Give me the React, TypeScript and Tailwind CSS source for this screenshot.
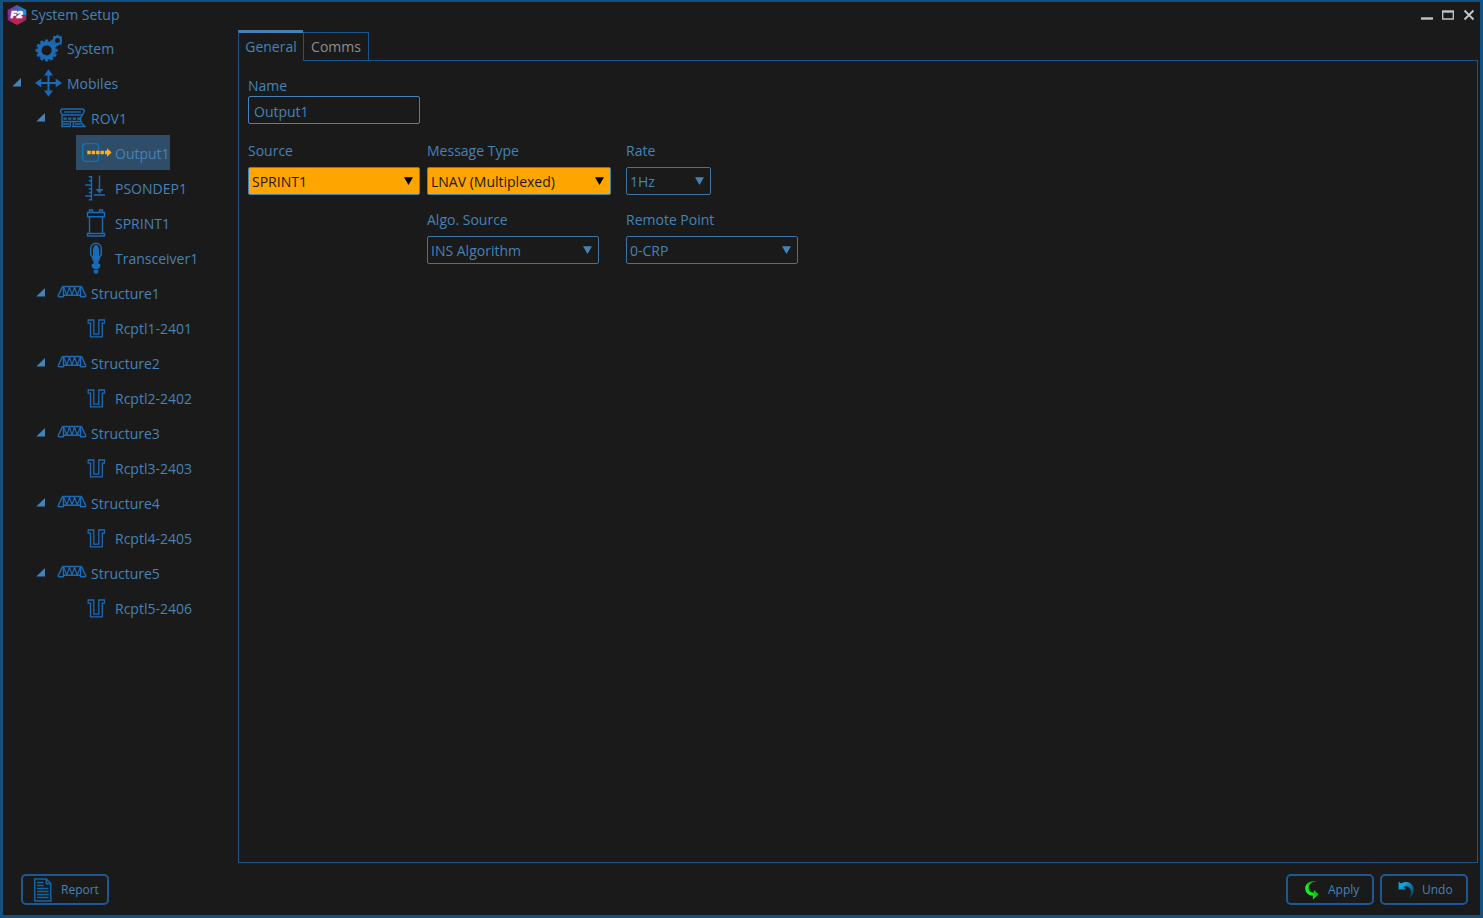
import { useState } from "react";
import type { ReactNode } from "react";

const BLUE = "#1c69b4";

function Logo() {
  return (
    <svg className="h-5 w-5" viewBox="0 0 20 20" aria-hidden="true">
      <defs>
        <linearGradient id="logoTop" x1="0" y1="0.2" x2="1" y2="0.3">
          <stop offset="0" stopColor="#a3248a" />
          <stop offset="0.5" stopColor="#4a58b0" />
          <stop offset="1" stopColor="#0b9be0" />
        </linearGradient>
        <linearGradient id="logoBottom" x1="0" y1="0" x2="1" y2="0.3">
          <stop offset="0" stopColor="#7a2a92" />
          <stop offset="0.6" stopColor="#d01f45" />
          <stop offset="1" stopColor="#8a2c80" />
        </linearGradient>
      </defs>
      <path d="M10 0 19.3 5v5.5H.7V5z" fill="url(#logoTop)" />
      <path d="M.7 10.3h18.6V15L10 20 .7 15z" fill="url(#logoBottom)" />
      <text x="9.7" y="13.2" textAnchor="middle" fontSize="9.5" fontWeight="900" fontStyle="italic" fontFamily="Inter, sans-serif" fill="#fff" stroke="#fff" strokeWidth="0.5">
        F2
      </text>
    </svg>
  );
}

function GearsIcon() {
  return (
    <svg className="h-7 w-7" viewBox="0 0 28 28" fill="none" stroke={BLUE} aria-hidden="true">
      <circle cx="12.6" cy="16.4" r="7.2" strokeWidth="4.4" />
      <circle cx="12.6" cy="16.4" r="9.800" strokeWidth="2.4" pathLength="24" strokeDasharray="1.200 .8" strokeDashoffset="0.6" />
      <circle cx="23.4" cy="6.4" r="3.600" strokeWidth="2.200" />
      <circle cx="23.4" cy="6.4" r="4.9" strokeWidth="1.6" pathLength="16" strokeDasharray="1.100 .9" strokeDashoffset="0.5" />
    </svg>
  );
}

function MoveIcon() {
  return (
    <svg className="h-7 w-7" viewBox="0 0 28 28" fill={BLUE} aria-hidden="true">
      <path d="M14.500 4v20M5 14h19" stroke={BLUE} strokeWidth="2" />
      <path d="M14.5.3 19 6.600h-9zM14.500 27.700 19 21.400h-9zM1 14l6.300-4.500v9zM28 14l-6.300-4.500v9z" />
    </svg>
  );
}

function RovIcon() {
  return (
    <svg className="h-7 w-7" viewBox="0 0 28 28" fill="none" stroke={BLUE} strokeWidth="1.4" aria-hidden="true">
      <path d="M5 5h19c1.500 0 2.300 1 2.300 2.200L24.500 11H4.500L2.700 8.500V7C2.700 5.800 3.500 5 5 5z" />
      <path d="M6 8h17" strokeWidth="1.4" />
      <path d="M4 11v11.500" />
      <path d="M5.500 14.700h17" strokeWidth="2.200" strokeDasharray="3.200 1.400" />
      <path d="M4 17.500h19.500M3.300 22.500h9M14 22.500h13.700M4 20h7M17 20h6M24 11.200c-2.200 3-2 8 2.500 11M12.300 17.500v5M16.200 17.500c-1 1.400-1 3.500-.5 5" />
    </svg>
  );
}

function OutputIcon() {
  return (
    <svg className="h-7 w-8" viewBox="0 0 32 28" fill="none" aria-hidden="true">
      <rect x="2.700" y="4.600" width="15.800" height="17.800" rx="2.600" stroke="#1273ae" strokeWidth="1.400" />
      <path d="M7.300 13.500h20" stroke="#fdb022" strokeWidth="3.400" strokeDasharray="3.400 1" />
      <path d="M27 9.300v8.400l4.600-4.200z" fill="#fdb022" />
    </svg>
  );
}

function DepthIcon() {
  return (
    <svg className="h-7 w-7" viewBox="0 0 28 28" fill="none" stroke={BLUE} strokeWidth="1.4" aria-hidden="true">
      <path d="M9.500 2v24.500M6.800 2.700h2.700M6.800 6.700h2.700M3.300 11h6.200M6.800 14.800h2.700M6.800 18.500h2.700M3.300 22h6.200M6.800 25.800h2.700M17.500 1.500v15M12 21h11" />
      <path d="M13.500 15h8l-4 4.400z" fill={BLUE} stroke="none" />
    </svg>
  );
}

function SprintIcon() {
  return (
    <svg className="h-7 w-7" viewBox="0 0 28 28" fill="none" stroke={BLUE} strokeWidth="1.4" aria-hidden="true">
      <path d="M5.500 3.500h17v4.300h-17zM7.500 3.500V1h3v2.500M17.500 3.500V1h3v2.500M7.500 7.800v16M20.500 7.800v16M7.500 24.500h-2v2.500h17v-2.500h-2M7.500 24.500h13" />
    </svg>
  );
}

function TransceiverIcon() {
  return (
    <svg className="h-8 w-7" viewBox="0 0 28 32" fill={BLUE} aria-hidden="true">
      <path d="M8.700 12.500V7C8.700 3.500 11 1.300 14 1.300S19.300 3.500 19.300 7v5.500l-2 3h-6.600z" fill="none" stroke={BLUE} strokeWidth="1.500" />
      <path d="M14 2.500c-2 1-3 3-3 5.500v7h6V8c0-2.500-1-4.500-3-5.500z" />
      <path d="M10.200 15h7.600v3.500h-7.600zM11.500 18.500h5v3.500h-5zM9.700 22h8.600v3l-2 1.500v.8h-4.600v-.8l-2-1.500zM11.700 28h4.600v2l-.8 1.500h-3l-.8-1.500z" />
    </svg>
  );
}

function StructureIcon() {
  return (
    <svg className="h-7 w-8" viewBox="0 0 32 28" fill="none" stroke={BLUE} strokeWidth="1.5" strokeLinejoin="round" aria-hidden="true">
      <path d="M6.500 7.500h19M2.300 17.700h5.200v-10M2.300 17.700v-1.200L6.500 7.500M29.700 17.700h-5.200v-10M29.700 17.700v-1.200L25.500 7.500M7.500 16.300h17" />
      <path d="M7.500 8l3.400 8 2.600-8 2.500 8 2.500-8 2.600 8 3.400-8" strokeWidth="1.200" />
    </svg>
  );
}

function ReceptacleIcon() {
  return (
    <svg className="h-7 w-7" viewBox="0 0 28 28" fill="none" stroke={BLUE} strokeWidth="1.300" aria-hidden="true">
      <path d="M6.200 6h5.600v14.200h5V6h5.700v3.200h-2.200v13.600H8.500V9.200H6.200z" />
    </svg>
  );
}

function ReportIcon() {
  return (
    <svg className="h-6 w-5" viewBox="0 0 20 24" fill="none" stroke="#0c68aa" strokeWidth="1.500" aria-hidden="true">
      <path d="M1.700 1h11.600l4.500 4.500V23H1.700zM13.300 1v4.700h4.500" />
      <path d="M4 4.500h6.500M4 7.500h6.500M4 10.500h11.600M4 13.500h11.600M4 16.500h11.600M4 19.500h11.600" />
    </svg>
  );
}

function ApplyIcon() {
  return (
    <svg className="h-5 w-4" viewBox="0 0 16 20" aria-hidden="true">
      <defs>
        <linearGradient id="applyFade" x1="1" y1="0" x2="0.300" y2="0.500">
          <stop offset="0" stopColor="#0d5c12" />
          <stop offset="1" stopColor="#14f014" />
        </linearGradient>
      </defs>
      <path d="M13.600 1.200C6.500-.2 1 3.500 1.200 8.500c.2 4.500 3.500 7 8 7.300l-.4 3.700 6-4.900-4.800-4.900-.3 3C6.600 12.600 4.500 11 4.600 7.800c.1-3.600 3.600-6.500 9-6.600z" fill="url(#applyFade)" />
    </svg>
  );
}

function UndoIcon() {
  return (
    <svg className="h-5 w-4" viewBox="0 0 16 20" aria-hidden="true">
      <defs>
        <linearGradient id="undoFade" x1="0" y1="0" x2="0.700" y2="1">
          <stop offset="0.250" stopColor="#10a5e0" />
          <stop offset="1" stopColor="#0c3550" />
        </linearGradient>
      </defs>
      <path d="M.6 1.500 3 3.600C9-.3 15.600 3.500 15.800 9.800c.1 3.800-2 7.200-5.300 9.200 2-2.800 2.700-6 2-9C11.700 6.700 8.500 5.300 5.700 6.700l2.600 2.700H.6z" fill="url(#undoFade)" />
    </svg>
  );
}

type Node = { label: string; icon: ReactNode; children?: Node[] };

const structure = (n: number, code: string): Node => ({
  label: `Structure${n}`,
  icon: <StructureIcon />,
  children: [{ label: `Rcptl${n}-${code}`, icon: <ReceptacleIcon /> }],
});

const tree: Node[] = [
  { label: "System", icon: <GearsIcon /> },
  {
    label: "Mobiles",
    icon: <MoveIcon />,
    children: [
      {
        label: "ROV1",
        icon: <RovIcon />,
        children: [
          { label: "Output1", icon: <OutputIcon /> },
          { label: "PSONDEP1", icon: <DepthIcon /> },
          { label: "SPRINT1", icon: <SprintIcon /> },
          { label: "Transceiver1", icon: <TransceiverIcon /> },
        ],
      },
      structure(1, "2401"),
      structure(2, "2402"),
      structure(3, "2403"),
      structure(4, "2405"),
      structure(5, "2406"),
    ],
  },
];

function TreeItem({ node, selected, onSelect }: { node: Node; selected: string; onSelect: (label: string) => void }) {
  const [open, setOpen] = useState(true);
  return (
    <li>
      <div className="flex h-[35px] items-stretch">
        <div className="flex w-[25px] shrink-0 items-center">
          {node.children && (
            <button type="button" aria-label={`Toggle ${node.label}`} aria-expanded={open} onClick={() => setOpen(!open)} className="pl-[9px]">
              <svg className="h-[9px] w-[9px]" viewBox="0 0 9 9" aria-hidden="true">
                <path d="M9 0v8.500H.3z" fill="#4682b4" />
              </svg>
            </button>
          )}
        </div>
        <button
          type="button"
          onClick={() => onSelect(node.label)}
          className={selected === node.label ? "flex items-center gap-[5px] bg-[#2f4d68] pl-1.5" : "flex items-center gap-[5px] pl-1.5"}
        >
          <span className="flex w-7 justify-center">
            <span className="shrink-0">{node.icon}</span>
          </span>
          <span className="pt-0.5">{node.label}</span>
        </button>
      </div>
      {node.children && open && (
        <ul className="pl-6">
          {node.children.map((child) => (
            <TreeItem key={child.label} node={child} selected={selected} onSelect={onSelect} />
          ))}
        </ul>
      )}
    </li>
  );
}

function Select({ id, label, options, className, changed = false }: { id: string; label: string; options: string[]; className: string; changed?: boolean }) {
  return (
    <div className={`flex flex-col gap-1.5 ${className}`}>
      <label htmlFor={id} className="leading-5">
        {label}
      </label>
      <div className="relative">
        <select
          id={id}
          className={
            changed
              ? "h-7 w-full appearance-none rounded-xs border border-[#4682b4] bg-[#ffa500] pt-0.5 pr-6 pl-[3px] text-[#1a1a1a]"
              : "h-7 w-full appearance-none rounded-xs border border-[#3d74a3] bg-[#1a1a1a] pt-0.5 pr-6 pl-[3px]"
          }
        >
          {options.map((option) => (
            <option key={option}>{option}</option>
          ))}
        </select>
        <svg className="pointer-events-none absolute top-2.5 right-[7px] h-2 w-[9px]" viewBox="0 0 9 8" aria-hidden="true">
          <path d="M0 .3h9L4.500 8z" fill={changed ? "#000" : "#4682b4"} />
        </svg>
      </div>
    </div>
  );
}

const actionClass = "flex h-[31px] w-[88px] items-center rounded-[5px] border-2 border-[#1d5794] text-xs";

export default function App() {
  const [selected, setSelected] = useState("Output1");
  return (
    <div className="flex min-h-screen flex-col border-[3px] border-t-2 border-[#15507f] bg-[#1a1a1a] font-['Open_Sans','Noto_Sans',sans-serif] text-sm text-[#4682b4]">
      <header className="mb-0.5 flex h-[26px] items-center justify-between pr-[5px] pl-1">
        <div className="flex items-center gap-1">
          <Logo />
          <h1>System Setup</h1>
        </div>
        <div className="flex items-center gap-[9px] text-[#c4c4c4]">
          <button type="button" aria-label="Minimize">
            <svg className="h-3 w-3" viewBox="0 0 12 12" aria-hidden="true">
              <path d="M0 9.500h12" stroke="currentColor" strokeWidth="2.400" />
            </svg>
          </button>
          <button type="button" aria-label="Maximize">
            <svg className="h-3 w-3" viewBox="0 0 12 12" fill="none" stroke="currentColor" aria-hidden="true">
              <path d="M.7 2v8h10.600V2" strokeWidth="1.300" />
              <path d="M0 2.500h12" strokeWidth="2.400" />
            </svg>
          </button>
          <button type="button" aria-label="Close">
            <svg className="h-3 w-3" viewBox="0 0 12 12" aria-hidden="true">
              <path d="m1.500 1.500 9 9m0-9-9 9" stroke="currentColor" strokeWidth="1.900" />
            </svg>
          </button>
        </div>
      </header>

      <div className="flex grow">
        <nav aria-label="System items" className="w-[235px] shrink-0">
          <ul>
            {tree.map((node) => (
              <TreeItem key={node.label} node={node} selected={selected} onSelect={setSelected} />
            ))}
          </ul>
        </nav>

        <main className="mr-[2px] flex grow flex-col">
          <div role="tablist" className="flex items-end">
            <button type="button" role="tab" aria-selected="true" className="h-[31px] w-[65px] border-t-3 border-l border-t-[#4682b4] border-l-[#1a5488]">
              General
            </button>
            <button type="button" role="tab" aria-selected="false" className="h-[29px] w-[66px] border border-[#1a5488] text-[#8d8d8d]">
              Comms
            </button>
            <div className="grow border-b border-[#1a5488]" />
          </div>
          <form className="flex grow flex-col gap-[17px] border border-t-0 border-[#1a5488] px-[9px] pt-[15px]">
            <div className="flex w-[172px] flex-col">
              <label htmlFor="name" className="leading-5">
                Name
              </label>
              <input id="name" defaultValue="Output1" className="h-7 rounded-xs border border-[#4682b4] bg-transparent px-[5px] pt-0.5" />
            </div>
            <div className="grid grid-cols-[179px_199px_172px] gap-y-[15px]">
              <Select id="source" label="Source" options={["SPRINT1"]} className="w-[172px]" changed />
              <Select id="message" label="Message Type" options={["LNAV (Multiplexed)"]} className="w-[184px]" changed />
              <Select id="rate" label="Rate" options={["1Hz"]} className="w-[85px]" />
              <Select id="algo" label="Algo. Source" options={["INS Algorithm"]} className="col-start-2 w-[172px]" />
              <Select id="remote" label="Remote Point" options={["0-CRP"]} className="w-[172px]" />
            </div>
          </form>
        </main>
      </div>

      <footer className="flex items-start justify-between pt-[11px] pr-3 pb-2.5 pl-[18px]">
        <button type="button" className={`${actionClass} gap-2 pl-2.5`}>
          <ReportIcon />
          Report
        </button>
        <div className="flex gap-1.5">
          <button type="button" className={`${actionClass} gap-2 pl-4`}>
            <ApplyIcon />
            Apply
          </button>
          <button type="button" className={`${actionClass} gap-2 pl-4`}>
            <UndoIcon />
            Undo
          </button>
        </div>
      </footer>
    </div>
  );
}
